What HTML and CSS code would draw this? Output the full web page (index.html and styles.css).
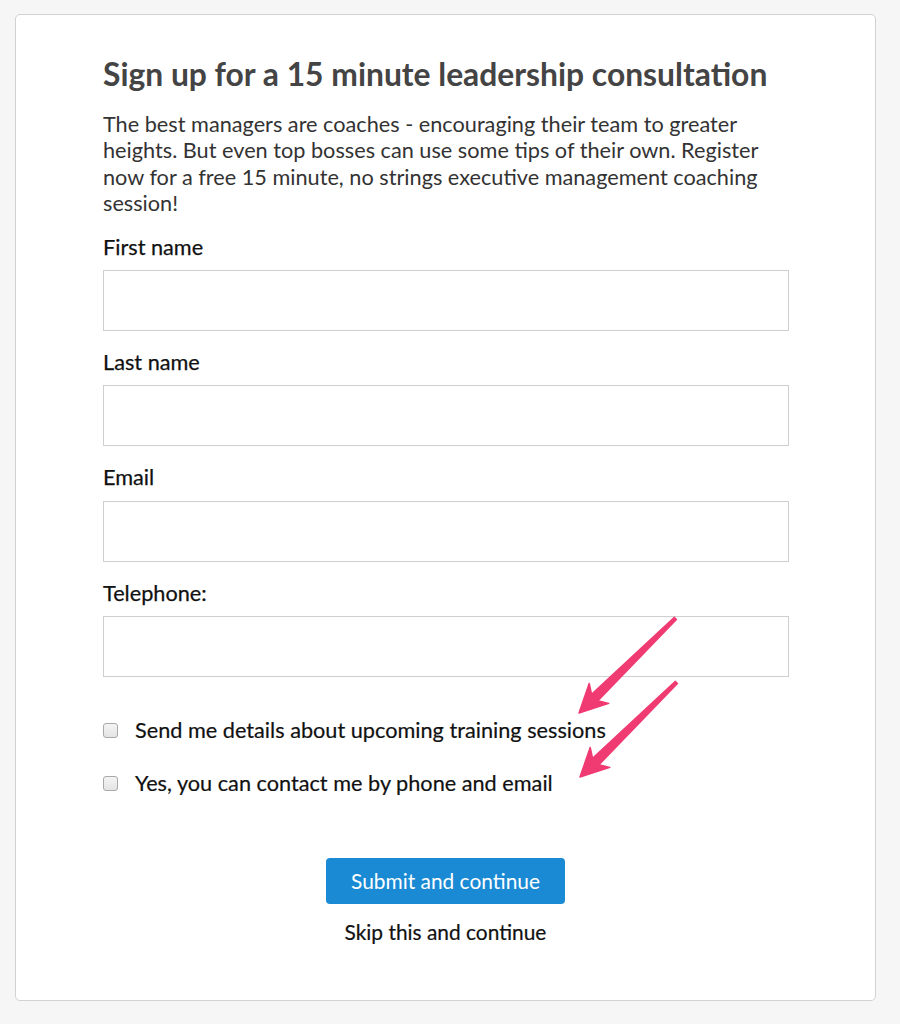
FILE: index.html
```html
<!DOCTYPE html>
<html lang="en">
<head>
<meta charset="utf-8">
<title>Sign up</title>
<link rel="stylesheet" href="styles.css">
</head>
<body>
<div class="card">
  <h1 class="title">Sign up for a 15 minute leadership consultation</h1>
  <p class="intro">The best managers are coaches - encouraging their team to greater heights. But even top bosses can use some tips of their own. Register now for a free 15 minute, no strings executive management coaching session!</p>
  <form class="form">
    <div class="field">
      <label class="label">First name</label>
      <input class="input" type="text">
    </div>
    <div class="field">
      <label class="label">Last name</label>
      <input class="input" type="text">
    </div>
    <div class="field">
      <label class="label">Email</label>
      <input class="input" type="text">
    </div>
    <div class="field">
      <label class="label">Telephone:</label>
      <input class="input" type="text">
    </div>
    <div class="checks">
      <label class="check"><span class="box"></span><span>Send me details about upcoming training sessions</span></label>
      <label class="check"><span class="box"></span><span>Yes, you can contact me by phone and email</span></label>
    </div>
    <div class="actions">
      <button type="button" class="submit">Submit and continue</button>
      <span class="skip">Skip this and continue</span>
    </div>
  </form>
  <svg class="arrows" width="900" height="1024" viewBox="0 0 900 1024">
    <g class="arrow">
      <polygon points="579,713 608.8,703.4 597.9,700.8 676.4,619.6 674.4,617.4 591.6,694.4 589.2,683.4"/>
    </g>
    <g class="arrow" transform="translate(1,64)">
      <polygon points="579,713 608.8,703.4 597.9,700.8 676.4,619.6 674.4,617.4 591.6,694.4 589.2,683.4"/>
    </g>
  </svg>
</div>
</body>
</html>
```
FILE: styles.css
```css
html, body {
  margin: 0;
  padding: 0;
}
body {
  background: #f6f6f6;
  font-family: Lato, "Open Sans", "Liberation Sans", sans-serif;
  padding: 14px 24px 23px 15px;
}
.card {
  position: relative;
  box-sizing: border-box;
  width: 861px;
  height: 987px;
  background: #fff;
  border: 1px solid #d2d2d2;
  border-radius: 5px;
  padding: 40px 87px 0 87px;
}
.title {
  margin: 0;
  font-size: 31.8px;
  line-height: 38px;
  font-weight: 700;
  color: #444;
}
.intro {
  margin: 18px 0 0 0;
  font-size: 21.7px;
  line-height: 26.3px;
  color: #333;
}
.form {
  margin-top: 17.5px;
}
.field {
  margin-bottom: 17.8px;
}
.label {
  display: block;
  font-size: 21.7px;
  line-height: 26px;
  color: #111;
  -webkit-text-stroke: 0.25px #111;
  margin-bottom: 10.5px;
}
.input {
  display: block;
  box-sizing: border-box;
  width: 686px;
  height: 61px;
  border: 1px solid #cfcfcf;
  margin: 0;
  background: #fff;
}
.checks {
  margin-top: 39.5px;
  display: flex;
  flex-direction: column;
  gap: 27px;
}
.check {
  display: flex;
  align-items: center;
  font-size: 21.7px;
  line-height: 26px;
  color: #111;
  -webkit-text-stroke: 0.2px #111;
}
.box {
  box-sizing: border-box;
  width: 15px;
  height: 15px;
  border: 1px solid #a9a9a9;
  border-radius: 3px;
  background: linear-gradient(#f4f4f4, #e4e4e4);
  margin: 2px 17px 0 0;
  flex: none;
}
.actions {
  margin-top: 62px;
  display: flex;
  flex-direction: column;
  align-items: center;
  gap: 15px;
}
.submit {
  box-sizing: border-box;
  width: 239px;
  height: 46px;
  border: none;
  border-radius: 4px;
  background: #1a8ad4;
  color: #fff;
  font-family: Lato, "Open Sans", "Liberation Sans", sans-serif;
  font-size: 20.9px;
  padding: 0;
}
.skip {
  font-size: 20.9px;
  line-height: 26px;
  color: #111;
  -webkit-text-stroke: 0.2px #111;
}
.arrows {
  position: absolute;
  left: -16px;
  top: -15px;
  pointer-events: none;
}
.arrow polygon {
  fill: #f03a72;
  stroke: #f03a72;
  stroke-width: 1.5;
  stroke-linejoin: round;
}
```
